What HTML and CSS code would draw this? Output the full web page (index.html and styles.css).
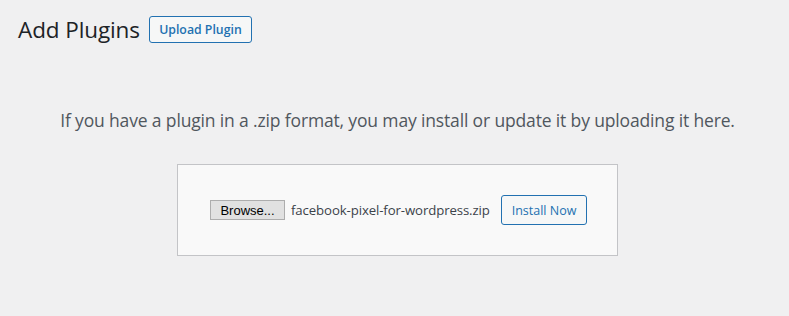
FILE: index.html
```html
<!DOCTYPE html>
<html lang="en">
<head>
  <meta charset="UTF-8" />
  <meta name="viewport" content="width=device-width, initial-scale=1.0"/>
  <title>Add Plugins</title>
  <link rel="stylesheet" href="styles.css">
</head>
<body>
  <div class="wrap">
    <div class="title-row">
      <h1>Add Plugins</h1>
      <button class="upload-btn">Upload Plugin</button>
    </div>

    <section class="upload">
      <p class="help">If you have a plugin in a .zip format, you may install or update it by uploading it here.</p>
      <form class="upload-form">
        <button type="button" class="browse-btn">Browse...</button>
        <span class="file-name">facebook-pixel-for-wordpress.zip</span>
        <button type="button" class="install-btn">Install Now</button>
      </form>
    </section>
  </div>
</body>
</html>
```

FILE: styles.css
```css
:root {
  --bg: #f0f0f1;
  --text: #1d2327;
  --muted: #50575e;
  --accent: #2271b1;
}

body {
  margin: 0;
  padding: 0;
  font-family: 'Open Sans', sans-serif;
  background-color: var(--bg);
  color: var(--text);
}

.wrap {
  padding: 14px 0 0 18px;
}

.title-row {
  display: flex;
  align-items: center;
  gap: 9px;
  height: 30px;
}

.title-row h1 {
  margin: 0;
  font-size: 22.5px;
  font-weight: 400;
  color: var(--text);
  letter-spacing: -0.1px;
}

.upload-btn {
  font-family: inherit;
  font-size: 12.3px;
  font-weight: 600;
  color: var(--accent);
  background: #f6f7f7;
  border: 1px solid var(--accent);
  border-radius: 3px;
  height: 27px;
  width: 103px;
  padding: 0;
  cursor: pointer;
}

.upload {
  display: flex;
  flex-direction: column;
  align-items: center;
  padding-right: 12px;
}

.help {
  margin: 64px 0 0;
  font-size: 17.5px;
  line-height: 24px;
  color: var(--muted);
  letter-spacing: -0.15px;
}

.upload-form {
  display: flex;
  align-items: center;
  margin-top: 32px;
  width: 377px;
  padding: 30px 30px 30px 32px;
  background: #f9f9f9;
  border: 1px solid #c3c4c7;
}

.browse-btn {
  font-family: 'Liberation Sans', sans-serif;
  font-size: 13px;
  color: #000;
  background: #e1e1e1;
  border: 1px solid #adadad;
  width: 75px;
  height: 20px;
  padding: 0;
}

.file-name {
  margin-left: 6px;
  font-size: 13.2px;
  color: #3c434a;
  letter-spacing: -0.1px;
}

.install-btn {
  margin-left: auto;
  font-family: inherit;
  font-size: 12.5px;
  color: var(--accent);
  background: #f6f7f7;
  border: 1px solid var(--accent);
  border-radius: 3px;
  width: 86px;
  height: 30px;
  padding: 0;
  cursor: pointer;
}
```
